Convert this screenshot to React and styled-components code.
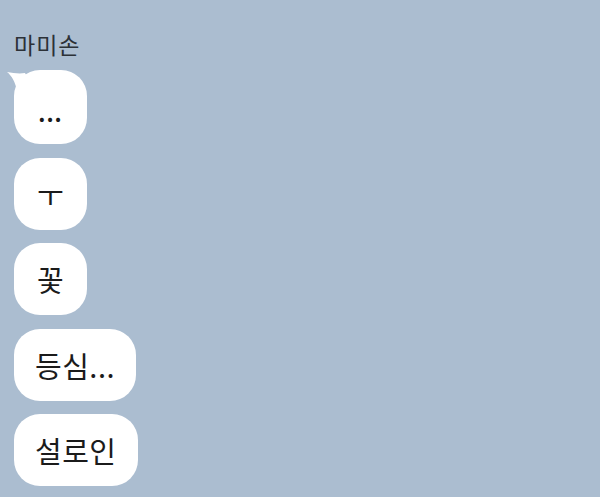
import React from "react";
import styled, { createGlobalStyle } from "styled-components";

const Global = createGlobalStyle`
  html, body { margin: 0; padding: 0; background: #abbdd0; }
  body { font-family: "Noto Sans CJK KR", "Noto Sans", sans-serif; }
`;

const Page = styled.div`
  width: 600px;
  height: 497px;
  box-sizing: border-box;
  padding: 29px 0 0 14px;
  background: #abbdd0;
  display: flex;
  flex-direction: column;
  align-items: flex-start;
`;

const Name = styled.div`
  font-size: 23px;
  letter-spacing: 1px;
  line-height: 30px;
  color: #2c3137;
  margin-bottom: 11px;
`;

const List = styled.div`
  display: flex;
  flex-direction: column;
  align-items: flex-start;
  gap: 13.5px;
`;

const Bubble = styled.div`
  position: relative;
  box-sizing: border-box;
  min-width: 73px;
  height: ${(p) => (p.$first ? 74 : 72)}px;
  padding: 0 21px;
  border-radius: 26px;
  background: #ffffff;
  color: #1b1b1b;
  font-size: 29px;
  letter-spacing: 0.5px;
  display: flex;
  align-items: center;
  justify-content: center;
  white-space: nowrap;
`;

const Tail = styled.svg`
  position: absolute;
  left: -7px;
  top: 2px;
  width: 22px;
  height: 18px;
`;

const Dots = styled.span`
  font-size: 22px;
  font-weight: 700;
  transform: translateY(5px);
  letter-spacing: 1px;
`;

export default function App() {
  return (
    <>
      <Global />
      <Page>
        <Name>마미손</Name>
        <List>
          <Bubble $first>
            <Tail viewBox="0 0 22 18">
              <path d="M0 0 C6 1 12 2 18 1 L22 8 L10 18 C8 10 5 4 0 0 Z" fill="#ffffff" />
            </Tail>
            <Dots>...</Dots>
          </Bubble>
          <Bubble>ㅜ</Bubble>
          <Bubble>꽃</Bubble>
          <Bubble>등심...</Bubble>
          <Bubble>설로인</Bubble>
        </List>
      </Page>
    </>
  );
}
